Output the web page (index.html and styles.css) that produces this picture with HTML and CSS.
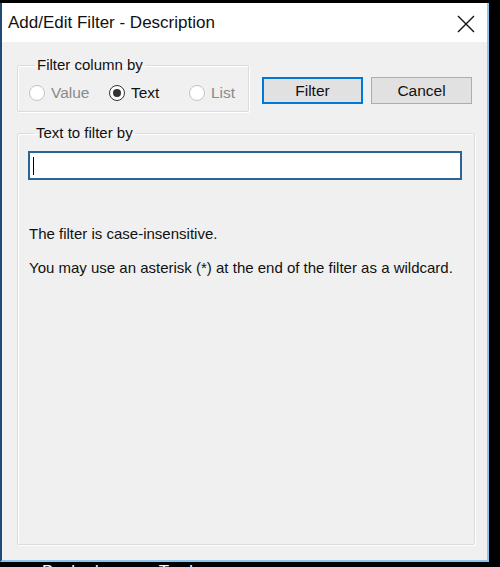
FILE: index.html
```html
<!DOCTYPE html>
<html lang="en">
<head>
    <meta charset="UTF-8">
    <title>Add/Edit Filter - Description</title>
    <link rel="stylesheet" href="styles.css">
</head>
<body>
    <div class="window">
        <div class="titlebar">
            <span class="title">Add/Edit Filter - Description</span>
            <span class="close">
                <svg width="18" height="18" viewBox="0 0 18 18">
                    <path d="M1 1 L17 17 M17 1 L1 17" stroke="#111" stroke-width="1.4" fill="none"/>
                </svg>
            </span>
        </div>

        <div class="content">
            <div class="top-row">
                <fieldset class="group group-mode">
                    <legend>Filter column by</legend>
                    <div class="radios">
                        <label class="radio disabled"><span class="dot"></span>Value</label>
                        <label class="radio checked"><span class="dot"></span>Text</label>
                        <label class="radio disabled"><span class="dot"></span>List</label>
                    </div>
                </fieldset>
                <button class="btn btn-default">Filter</button>
                <button class="btn">Cancel</button>
            </div>

            <fieldset class="group group-text">
                <legend>Text to filter by</legend>
                <div class="input"><span class="caret"></span></div>
                <p class="note first">The filter is case-insensitive.</p>
                <p class="note">You may use an asterisk (*) at the end of the filter as a wildcard.</p>
            </fieldset>
        </div>
    </div>

    <div class="behind">
        <span class="col-a">Backed</span>
        <span class="col-b">Trader</span>
    </div>
</body>
</html>
```

FILE: styles.css
```css
body {
    margin: 0;
    background-color: #000;
    font-family: "Liberation Sans", Arial, sans-serif;
    color: #000;
    overflow: hidden;
}

.window {
    width: 485px;
    margin-top: 3px;
    border-left: 2px solid #1f4a78;
    border-right: 2px solid #8cc6ec;
    border-bottom: 2px solid #8cc6ec;
    background-color: #f0f0f0;
}

.titlebar {
    height: 39px;
    background-color: #fff;
    display: flex;
    align-items: center;
    justify-content: space-between;
    padding: 0 12px 0 6px;
}

.title {
    font-size: 17px;
    color: #111;
}

.close {
    display: flex;
    margin-top: 2px;
}

.content {
    height: 518px;
    padding: 14px 0 0 15px;
    box-sizing: border-box;
}

.top-row {
    display: flex;
    align-items: flex-start;
}

.group {
    margin: 0;
    min-width: 0;
    border: 1px solid #dcdcdc;
    border-radius: 2px;
    box-shadow: inset 1px 1px 0 #fff, 1px 1px 0 #fff;
}

.group legend {
    font-size: 15px;
    padding: 0 2px;
    margin-left: 6px;
    line-height: 18px;
    color: #111;
}

.group-mode {
    flex: 0 0 232px;
    width: 232px;
    height: 56px;
    box-sizing: border-box;
    padding: 10px 0 0 11px;
}

.radios {
    display: flex;
}

.radio {
    width: 80px;
    flex-shrink: 0;
    display: flex;
    align-items: center;
    gap: 6px;
    font-size: 15.5px;
    color: #111;
}

.radio:last-child {
    width: auto;
}

.radio .dot {
    width: 14px;
    height: 14px;
    border: 1px solid #333;
    border-radius: 50%;
    background-color: #fff;
    display: flex;
    align-items: center;
    justify-content: center;
}

.radio.disabled {
    color: #8a8a8a;
}

.radio.disabled .dot {
    border-color: #c4c4c4;
}

.radio.checked .dot::after {
    content: "";
    width: 8px;
    height: 8px;
    border-radius: 50%;
    background-color: #333;
}

.btn {
    margin-top: 21px;
    width: 101px;
    height: 27px;
    font-family: inherit;
    font-size: 15.5px;
    color: #111;
    background-color: #e1e1e1;
    border: 1px solid #adadad;
    padding: 0;
}

.btn-default {
    margin-left: 13px;
    margin-right: 8px;
    border: 2px solid #0078d7;
}

.group-text {
    width: 458px;
    height: 421px;
    box-sizing: border-box;
    margin-top: 12px;
    padding: 9px 0 0 10px;
}

.input {
    width: 434px;
    height: 29px;
    box-sizing: border-box;
    border: 2px solid #2a6496;
    background-color: #fff;
    display: flex;
    align-items: center;
    padding-left: 3px;
}

.caret {
    width: 1px;
    height: 18px;
    background-color: #000;
}

.note {
    font-size: 15px;
    margin: 0;
    padding-left: 1px;
    color: #111;
}

.note.first {
    margin-top: 45px;
    margin-bottom: 17px;
}

.behind {
    display: flex;
    color: #fff;
    font-size: 17px;
    line-height: 20px;
    padding-left: 42px;
}

.behind .col-b {
    margin-left: 60px;
}
```
